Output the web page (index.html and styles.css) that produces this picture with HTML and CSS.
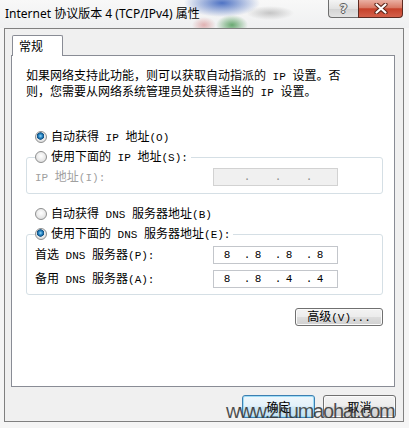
FILE: index.html
```html
<!DOCTYPE html>
<html lang="zh-CN">
<head>
<meta charset="utf-8">
<link rel="stylesheet" href="styles.css">
</head>
<body>
<div class="titlebar">
  <div class="title">Internet 协议版本 4 (TCP/IPv4) 属性</div>
  <div class="caps">
    <div class="cap help">?</div>
    <div class="cap close">
      <svg width="14" height="11" viewBox="0 0 14 11"><path d="M2.5 1.5 L11.5 9.5 M11.5 1.5 L2.5 9.5" stroke="#5a2418" stroke-width="4.2" stroke-linecap="round"/><path d="M2.5 1.5 L11.5 9.5 M11.5 1.5 L2.5 9.5" stroke="#ffffff" stroke-width="2.2" stroke-linecap="round"/></svg>
    </div>
  </div>
</div>
<div class="client">
  <div class="tabs"><div class="tab">常规</div></div>
  <div class="pane">
    <p class="intro">如果网络支持此功能，则可以获取自动指派的<span class="a"> IP </span>设置。否<br>则，您需要从网络系统管理员处获得适当的<span class="a"> IP </span>设置。</p>

    <div class="opt opt-first"><span class="radio on"></span><span>自动获得<span class="a"> IP </span>地址<span class="a">(O)</span></span></div>
    <fieldset class="grp">
      <legend><span class="lg"><span class="radio"></span><span>使用下面的<span class="a"> IP </span>地址<span class="a">(S):</span></span></span></legend>
      <div class="row dis"><span class="lbl"><span class="a">IP </span>地址<span class="a">(I):</span></span><span class="ip off"><span class="n"></span><span class="dot">.</span><span class="n"></span><span class="dot">.</span><span class="n"></span><span class="dot">.</span><span class="n"></span></span></div>
    </fieldset>

    <div class="opt opt-sec"><span class="radio"></span><span>自动获得<span class="a"> DNS </span>服务器地址<span class="a">(B)</span></span></div>
    <fieldset class="grp grp2">
      <legend><span class="lg"><span class="radio on"></span><span>使用下面的<span class="a"> DNS </span>服务器地址<span class="a">(E):</span></span></span></legend>
      <div class="row"><span class="lbl">首选<span class="a"> DNS </span>服务器<span class="a">(P):</span></span><span class="ip"><span class="n">8</span><span class="dot">.</span><span class="n">8</span><span class="dot">.</span><span class="n">8</span><span class="dot">.</span><span class="n">8</span></span></div>
      <div class="row row2"><span class="lbl">备用<span class="a"> DNS </span>服务器<span class="a">(A):</span></span><span class="ip"><span class="n">8</span><span class="dot">.</span><span class="n">8</span><span class="dot">.</span><span class="n">4</span><span class="dot">.</span><span class="n">4</span></span></div>
    </fieldset>

    <div class="advrow"><button class="btn adv">高级<span class="a">(V)...</span></button></div>
  </div>
  <div class="footer">
    <button class="btn def">确定</button>
    <button class="btn">取消</button>
  </div>
</div>
<div class="wm">www.zhumaohai.com</div>
</body>
</html>
```
FILE: styles.css
```css
html, body {
  margin: 0;
}
body {
  width: 409px;
  height: 428px;
  overflow: hidden;
  position: relative;
  background: #f5f5f5;
  font-family: "Noto Sans CJK SC", sans-serif;
  font-size: 12px;
  line-height: 14px;
  color: #000;
}
.a {
  font-family: "Liberation Mono", monospace;
  font-size: 11px;
}

/* title bar */
.titlebar {
  height: 28px;
  display: flex;
  align-items: flex-start;
  background:
    radial-gradient(ellipse 16px 10px at 232px 25px, rgba(70,150,80,0.8), rgba(70,150,80,0) 100%),
    radial-gradient(ellipse 38px 14px at 222px 3px, rgba(60,100,190,0.9), rgba(60,100,190,0) 100%),
    radial-gradient(ellipse 12px 8px at 204px 25px, rgba(200,80,80,0.4), rgba(200,80,80,0) 100%),
    radial-gradient(ellipse 24px 7px at 270px 13px, rgba(140,140,140,0.45), rgba(140,140,140,0) 100%),
    linear-gradient(#f8f8f8, #eff0f1);
}
.title {
  font-family: "Noto Sans", "Noto Sans CJK SC", sans-serif;
  font-size: 12px;
  line-height: 14px;
  padding: 7px 0 0 5px;
  white-space: nowrap;
}
.caps {
  margin-left: auto;
  margin-right: 6px;
  display: flex;
}
.cap {
  height: 18px;
  box-sizing: border-box;
  border: 1px solid #6e6e6e;
  border-top: none;
  display: flex;
  align-items: center;
  justify-content: center;
}
.help {
  width: 30px;
  border-right: none;
  border-radius: 0 0 0 4px;
  background: linear-gradient(#f4f4f4, #e2e2e2 50%, #d3d3d3 52%, #e3e3e3);
  color: #e9e9e9;
  font: bold 13px/16px "DejaVu Sans", sans-serif;
  text-shadow: -1px 0 #5c5c5c, 1px 0 #5c5c5c, 0 -1px #5c5c5c, 0 1px #5c5c5c;
}
.close {
  width: 45px;
  border-color: #5d2a21;
  border-radius: 0 0 4px 0;
  background: linear-gradient(#eab0a3, #d97a66 45%, #c6412a 52%, #d4604a);
}

/* client */
.client {
  margin-left: 4px;
  width: 400px;
  height: 394px;
  box-sizing: border-box;
  border: 1px solid #808080;
  background: #f0f0f0;
}
.tabs {
  display: flex;
  padding: 6px 0 0 7px;
}
.tab {
  width: 51px;
  height: 21px;
  box-sizing: border-box;
  border: 1px solid #898c95;
  border-bottom: none;
  border-radius: 2px 2px 0 0;
  background: #fff;
  padding-left: 6px;
  line-height: 19px;
  margin-bottom: -1px;
  position: relative;
  z-index: 1;
}
.pane {
  margin-left: 6px;
  width: 384px;
  height: 332px;
  box-sizing: border-box;
  border: 1px solid #898c95;
  background: #fff;
  padding: 12px 11px 0 14px;
}
.intro {
  margin: 0;
  line-height: 13px;
  white-space: nowrap;
}
.opt {
  display: flex;
  align-items: center;
  gap: 4px;
  height: 14px;
  margin-left: 9px;
  white-space: nowrap;
}
.opt-first { margin-top: 30px; }
.opt-sec { margin-top: 13px; }

.radio {
  width: 12px;
  height: 12px;
  box-sizing: border-box;
  border-radius: 50%;
  border: 1px solid #8e8f8f;
  background: radial-gradient(circle at 50% 40%, #ffffff 0, #e9e9e9 55%, #d2d2d2 100%);
  flex: none;
}
.radio.on {
  background:
    radial-gradient(circle at 45% 40%, #9ad8f5 0, #2d8ac8 1.8px, #0f4f82 3.4px, rgba(15,79,130,0) 4px),
    radial-gradient(circle at 50% 40%, #ffffff 0, #e9e9e9 55%, #d2d2d2 100%);
}

.grp {
  margin: 6px 0 0;
  padding: 4px 12px 7px 8px;
  border: 1px solid #d5dfe5;
  border-radius: 3px;
  min-width: 0;
}
.grp2 {
  padding-top: 5px;
  padding-bottom: 6px;
}
legend {
  padding: 0 3px 0 0;
  margin: 0;
  line-height: 14px;
}
.lg {
  display: flex;
  align-items: center;
  gap: 4px;
  height: 14px;
  white-space: nowrap;
}
.row {
  display: flex;
  align-items: center;
  height: 18px;
}
.row2 { margin-top: 6px; }
.lbl {
  width: 178px;
  white-space: nowrap;
}
.dis .lbl { color: #a0a0a0; }
.ip {
  width: 125px;
  height: 18px;
  box-sizing: border-box;
  border: 1px solid #c3c6cb;
  background: #fff;
  display: flex;
  align-items: center;
  padding-left: 8px;
  font-family: "Liberation Mono", monospace;
  font-size: 11px;
}
.ip.off {
  background: #f0f0f0;
  border-color: #d2d2d2;
  color: #8a8a8a;
}
.ip .n {
  width: 10px;
  text-align: center;
}
.ip .dot {
  width: 10px;
  text-align: center;
  margin: 0 1px 0 10px;
}

.advrow {
  display: flex;
  justify-content: flex-end;
  margin-top: 13px;
}
.btn {
  box-sizing: border-box;
  border: 1px solid #707070;
  border-radius: 3px;
  background: linear-gradient(#f3f3f3 0%, #ececec 48%, #dddddd 52%, #d0d0d0 100%);
  box-shadow: inset 0 0 0 1px #fbfbfb;
  font-family: "Noto Sans CJK SC", sans-serif;
  font-size: 12px;
  color: #000;
  padding: 0;
  line-height: 14px;
}
.adv {
  width: 88px;
  height: 18px;
}
.footer {
  display: flex;
  justify-content: flex-end;
  gap: 8px;
  padding: 8px 7px 0 0;
}
.footer .btn {
  width: 73px;
  height: 23px;
}
.btn.def {
  border-color: #3c7fb1;
  box-shadow: inset 0 0 0 1px #9fdcf6;
  background: linear-gradient(#eef7fc 0%, #e3f1fa 48%, #cfe8f6 52%, #c1e0f3 100%);
}

.wm {
  position: absolute;
  left: 226px;
  top: 401px;
  font-family: "Liberation Sans", sans-serif;
  font-size: 20px;
  line-height: 20px;
  letter-spacing: -1.2px;
  color: rgba(55, 55, 55, 0.88);
  white-space: nowrap;
}
```
